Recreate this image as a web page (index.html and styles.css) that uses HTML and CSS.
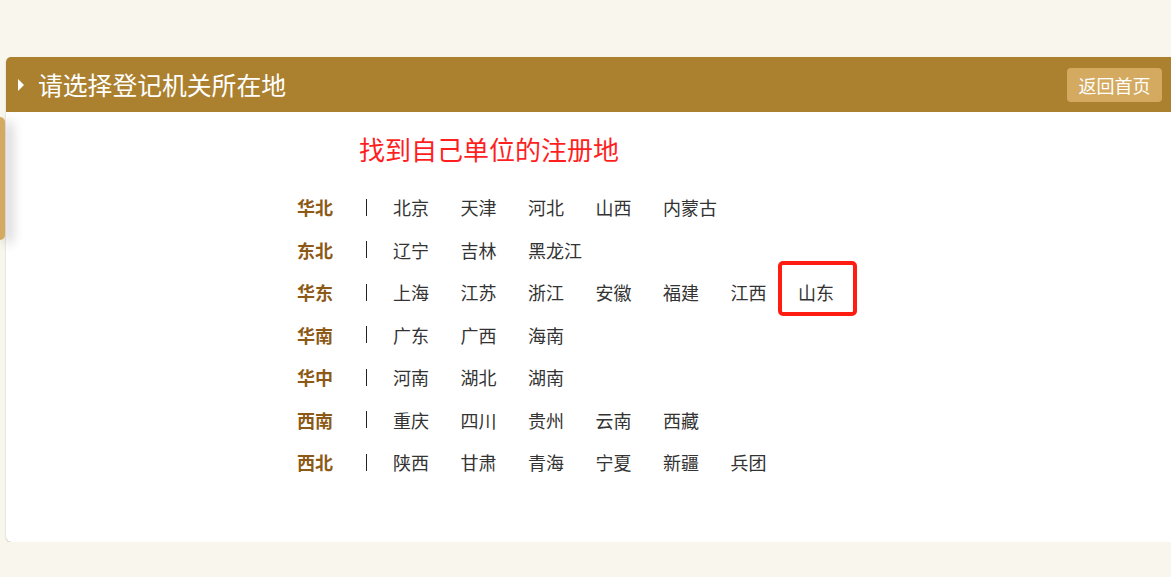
FILE: index.html
```html
<!DOCTYPE html>
<html lang="zh-CN">
<head>
    <meta charset="UTF-8">
    <meta name="viewport" content="width=device-width, initial-scale=1.0">
    <title>请选择登记机关所在地</title>
    <link rel="stylesheet" href="styles.css">
</head>
<body>
    <div class="side-tab"></div>

    <div class="panel">
        <div class="panel-head">
            <span class="arrow"></span>
            <h1 class="panel-title">请选择登记机关所在地</h1>
            <a class="home-btn" href="#">返回首页</a>
        </div>

        <div class="panel-body">
            <p class="hint">找到自己单位的注册地</p>

            <div class="regions">
                <div class="region">
                    <span class="region-name">华北</span>
                    <span class="sep"></span>
                    <a class="city" href="#">北京</a>
                    <a class="city" href="#">天津</a>
                    <a class="city" href="#">河北</a>
                    <a class="city" href="#">山西</a>
                    <a class="city" href="#">内蒙古</a>
                </div>
                <div class="region">
                    <span class="region-name">东北</span>
                    <span class="sep"></span>
                    <a class="city" href="#">辽宁</a>
                    <a class="city" href="#">吉林</a>
                    <a class="city" href="#">黑龙江</a>
                </div>
                <div class="region">
                    <span class="region-name">华东</span>
                    <span class="sep"></span>
                    <a class="city" href="#">上海</a>
                    <a class="city" href="#">江苏</a>
                    <a class="city" href="#">浙江</a>
                    <a class="city" href="#">安徽</a>
                    <a class="city" href="#">福建</a>
                    <a class="city" href="#">江西</a>
                    <a class="city marked" href="#">山东</a>
                </div>
                <div class="region">
                    <span class="region-name">华南</span>
                    <span class="sep"></span>
                    <a class="city" href="#">广东</a>
                    <a class="city" href="#">广西</a>
                    <a class="city" href="#">海南</a>
                </div>
                <div class="region">
                    <span class="region-name">华中</span>
                    <span class="sep"></span>
                    <a class="city" href="#">河南</a>
                    <a class="city" href="#">湖北</a>
                    <a class="city" href="#">湖南</a>
                </div>
                <div class="region">
                    <span class="region-name">西南</span>
                    <span class="sep"></span>
                    <a class="city" href="#">重庆</a>
                    <a class="city" href="#">四川</a>
                    <a class="city" href="#">贵州</a>
                    <a class="city" href="#">云南</a>
                    <a class="city" href="#">西藏</a>
                </div>
                <div class="region">
                    <span class="region-name">西北</span>
                    <span class="sep"></span>
                    <a class="city" href="#">陕西</a>
                    <a class="city" href="#">甘肃</a>
                    <a class="city" href="#">青海</a>
                    <a class="city" href="#">宁夏</a>
                    <a class="city" href="#">新疆</a>
                    <a class="city" href="#">兵团</a>
                </div>
            </div>
        </div>
    </div>
</body>
</html>
```

FILE: styles.css
```css
:root {
    --page-bg: #f9f6ee;
    --gold: #ab8130;
    --gold-light: #d4aa60;
    --brown: #8c5a16;
    --red: #ff1f1f;
}

*,
*::before,
*::after {
    box-sizing: border-box;
    margin: 0;
    padding: 0;
}

body {
    background: var(--page-bg);
    font-family: "Noto Sans CJK SC", "Liberation Sans", sans-serif;
    color: #333;
    overflow: hidden;
}

a {
    text-decoration: none;
    color: inherit;
}

.side-tab {
    position: fixed;
    left: 0;
    top: 117px;
    width: 5px;
    height: 123px;
    background: var(--gold-light);
    border-radius: 0 5px 5px 0;
    box-shadow: 6px 4px 12px rgba(0, 0, 0, 0.3);
    z-index: 2;
}

.panel {
    width: 1170px;
    margin: 57px 0 0 6px;
    background: #fff;
    border-radius: 5px 5px 6px 6px;
    box-shadow: 0 1px 2px rgba(0, 0, 0, 0.2);
    overflow: hidden;
}

.panel-head {
    display: flex;
    align-items: center;
    height: 55px;
    padding: 0 14px 0 12px;
    background: var(--gold);
    color: #fff;
}

.arrow {
    width: 0;
    height: 0;
    border-top: 6px solid transparent;
    border-bottom: 6px solid transparent;
    border-left: 6px solid #fff;
    margin-right: 14px;
}

.panel-title {
    flex: 1;
    font-size: 24.8px;
    font-weight: normal;
    line-height: 55px;
}

.home-btn {
    height: 34px;
    line-height: 34px;
    padding: 0 11.5px;
    font-size: 18px;
    background: var(--gold-light);
    border-radius: 4px;
    color: #fff;
}

.panel-body {
    padding: 19px 0 58px;
}

.hint {
    margin-left: 353px;
    font-size: 26px;
    line-height: 36px;
    color: var(--red);
}

.regions {
    margin: 19px 0 0 291px;
}

.region {
    display: flex;
    align-items: center;
    height: 42.5px;
}

.region-name {
    width: 36px;
    font-size: 18px;
    font-weight: bold;
    color: var(--brown);
}

.sep {
    width: 1px;
    height: 17px;
    margin: 0 26px 0 33px;
    background: #222;
}

.city {
    position: relative;
    width: 67.5px;
    font-size: 18px;
    line-height: 26px;
    color: #333;
}

.city.marked::after {
    content: '';
    position: absolute;
    top: -18px;
    left: -20px;
    width: 79px;
    height: 55px;
    border: 4px solid #ff1c10;
    border-radius: 5px;
}
```
